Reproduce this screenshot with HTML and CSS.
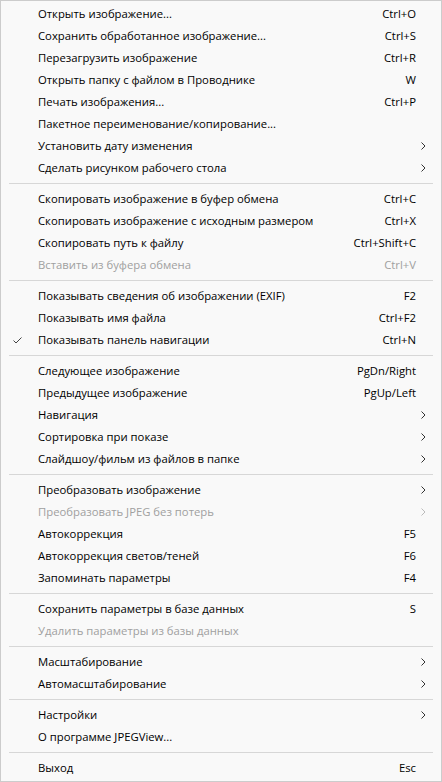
FILE: index.html
```html
<!DOCTYPE html>
<html lang="ru">
<head>
<meta charset="utf-8">
<link rel="stylesheet" href="styles.css">
</head>
<body>
<div class="menu">
  <div class="row"><span class="chk"></span><span class="lbl">Открыть изображение...</span><span class="key">Ctrl+O</span><span class="sub"></span></div>
  <div class="row"><span class="chk"></span><span class="lbl">Сохранить обработанное изображение...</span><span class="key">Ctrl+S</span><span class="sub"></span></div>
  <div class="row"><span class="chk"></span><span class="lbl">Перезагрузить изображение</span><span class="key">Ctrl+R</span><span class="sub"></span></div>
  <div class="row"><span class="chk"></span><span class="lbl">Открыть папку с файлом в Проводнике</span><span class="key">W</span><span class="sub"></span></div>
  <div class="row"><span class="chk"></span><span class="lbl">Печать изображения...</span><span class="key">Ctrl+P</span><span class="sub"></span></div>
  <div class="row"><span class="chk"></span><span class="lbl">Пакетное переименование/копирование...</span><span class="key"></span><span class="sub"></span></div>
  <div class="row"><span class="chk"></span><span class="lbl">Установить дату изменения</span><span class="key"></span><span class="sub"><svg viewBox="0 0 5 8" width="5" height="8"><path d="M0.5 0.5 L4 4 L0.5 7.5" fill="none" stroke="#333" stroke-width="1"/></svg></span></div>
  <div class="row"><span class="chk"></span><span class="lbl">Сделать рисунком рабочего стола</span><span class="key"></span><span class="sub"><svg viewBox="0 0 5 8" width="5" height="8"><path d="M0.5 0.5 L4 4 L0.5 7.5" fill="none" stroke="#333" stroke-width="1"/></svg></span></div>
  <div class="sep"></div>
  <div class="row"><span class="chk"></span><span class="lbl">Скопировать изображение в буфер обмена</span><span class="key">Ctrl+C</span><span class="sub"></span></div>
  <div class="row"><span class="chk"></span><span class="lbl">Скопировать изображение с исходным размером</span><span class="key">Ctrl+X</span><span class="sub"></span></div>
  <div class="row"><span class="chk"></span><span class="lbl">Скопировать путь к файлу</span><span class="key">Ctrl+Shift+C</span><span class="sub"></span></div>
  <div class="row off"><span class="chk"></span><span class="lbl">Вставить из буфера обмена</span><span class="key">Ctrl+V</span><span class="sub"></span></div>
  <div class="sep"></div>
  <div class="row"><span class="chk"></span><span class="lbl">Показывать сведения об изображении (EXIF)</span><span class="key">F2</span><span class="sub"></span></div>
  <div class="row"><span class="chk"></span><span class="lbl">Показывать имя файла</span><span class="key">Ctrl+F2</span><span class="sub"></span></div>
  <div class="row"><span class="chk"><svg viewBox="0 0 9 7" width="9" height="7"><path d="M0.5 3.5 L3 6 L8.5 0.5" fill="none" stroke="#444" stroke-width="1"/></svg></span><span class="lbl">Показывать панель навигации</span><span class="key">Ctrl+N</span><span class="sub"></span></div>
  <div class="sep"></div>
  <div class="row"><span class="chk"></span><span class="lbl">Следующее изображение</span><span class="key">PgDn/Right</span><span class="sub"></span></div>
  <div class="row"><span class="chk"></span><span class="lbl">Предыдущее изображение</span><span class="key">PgUp/Left</span><span class="sub"></span></div>
  <div class="row"><span class="chk"></span><span class="lbl">Навигация</span><span class="key"></span><span class="sub"><svg viewBox="0 0 5 8" width="5" height="8"><path d="M0.5 0.5 L4 4 L0.5 7.5" fill="none" stroke="#333" stroke-width="1"/></svg></span></div>
  <div class="row"><span class="chk"></span><span class="lbl">Сортировка при показе</span><span class="key"></span><span class="sub"><svg viewBox="0 0 5 8" width="5" height="8"><path d="M0.5 0.5 L4 4 L0.5 7.5" fill="none" stroke="#333" stroke-width="1"/></svg></span></div>
  <div class="row"><span class="chk"></span><span class="lbl">Слайдшоу/фильм из файлов в папке</span><span class="key"></span><span class="sub"><svg viewBox="0 0 5 8" width="5" height="8"><path d="M0.5 0.5 L4 4 L0.5 7.5" fill="none" stroke="#333" stroke-width="1"/></svg></span></div>
  <div class="sep"></div>
  <div class="row"><span class="chk"></span><span class="lbl">Преобразовать изображение</span><span class="key"></span><span class="sub"><svg viewBox="0 0 5 8" width="5" height="8"><path d="M0.5 0.5 L4 4 L0.5 7.5" fill="none" stroke="#333" stroke-width="1"/></svg></span></div>
  <div class="row off"><span class="chk"></span><span class="lbl">Преобразовать JPEG без потерь</span><span class="key"></span><span class="sub"><svg viewBox="0 0 5 8" width="5" height="8"><path d="M0.5 0.5 L4 4 L0.5 7.5" fill="none" stroke="#bbb" stroke-width="1"/></svg></span></div>
  <div class="row"><span class="chk"></span><span class="lbl">Автокоррекция</span><span class="key">F5</span><span class="sub"></span></div>
  <div class="row"><span class="chk"></span><span class="lbl">Автокоррекция светов/теней</span><span class="key">F6</span><span class="sub"></span></div>
  <div class="row"><span class="chk"></span><span class="lbl">Запоминать параметры</span><span class="key">F4</span><span class="sub"></span></div>
  <div class="sep"></div>
  <div class="row"><span class="chk"></span><span class="lbl">Сохранить параметры в базе данных</span><span class="key">S</span><span class="sub"></span></div>
  <div class="row off"><span class="chk"></span><span class="lbl">Удалить параметры из базы данных</span><span class="key"></span><span class="sub"></span></div>
  <div class="sep"></div>
  <div class="row"><span class="chk"></span><span class="lbl">Масштабирование</span><span class="key"></span><span class="sub"><svg viewBox="0 0 5 8" width="5" height="8"><path d="M0.5 0.5 L4 4 L0.5 7.5" fill="none" stroke="#333" stroke-width="1"/></svg></span></div>
  <div class="row"><span class="chk"></span><span class="lbl">Автомасштабирование</span><span class="key"></span><span class="sub"><svg viewBox="0 0 5 8" width="5" height="8"><path d="M0.5 0.5 L4 4 L0.5 7.5" fill="none" stroke="#333" stroke-width="1"/></svg></span></div>
  <div class="sep"></div>
  <div class="row"><span class="chk"></span><span class="lbl">Настройки</span><span class="key"></span><span class="sub"><svg viewBox="0 0 5 8" width="5" height="8"><path d="M0.5 0.5 L4 4 L0.5 7.5" fill="none" stroke="#333" stroke-width="1"/></svg></span></div>
  <div class="row"><span class="chk"></span><span class="lbl">О программе JPEGView...</span><span class="key"></span><span class="sub"></span></div>
  <div class="sep"></div>
  <div class="row"><span class="chk"></span><span class="lbl">Выход</span><span class="key">Esc</span><span class="sub"></span></div>
</div>
</body>
</html>
```
FILE: styles.css
```css
html, body {
  margin: 0;
  padding: 0;
  background: #f9f9f9;
}
.menu {
  box-sizing: border-box;
  width: 442px;
  height: 782px;
  border: 1px solid #cccccc;
  background: #f9f9f9;
  padding: 2px 0;
  font-family: "Open Sans", "Noto Sans", sans-serif;
  font-size: 11.3px;
  color: #000;
  display: flex;
  flex-direction: column;
}
.row {
  height: 22px;
  box-sizing: border-box;
  padding-bottom: 2px;
  display: flex;
  align-items: center;
  white-space: nowrap;
}
.chk {
  width: 37px;
  flex: none;
  display: flex;
  justify-content: flex-start;
  padding-left: 12px;
  padding-top: 2px;
  box-sizing: border-box;
}
.chk svg { display: block; }
.lbl {
  flex: 1;
}
.key {
  flex: none;
  text-align: right;
}
.sub {
  width: 25px;
  flex: none;
  display: flex;
  justify-content: flex-start;
  padding-left: 5px;
  padding-top: 2px;
  box-sizing: border-box;
}
.sub svg { display: block; }
.off { color: #a0a0a0; }
.sep {
  height: 1px;
  margin: 4px 8px;
  background: #d7d7d7;
  flex: none;
}
```
